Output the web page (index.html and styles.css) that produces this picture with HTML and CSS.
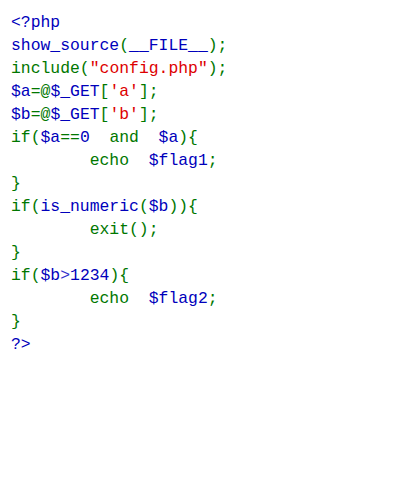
FILE: index.html
```html
<!DOCTYPE html>
<html>
<head>
<meta charset="utf-8">
<link rel="stylesheet" href="styles.css">
</head>
<body>
<code class="src"><span class="d"><div class="ln"><span class="d">&lt;?php</span></div><div class="ln"><span class="d">show_source</span><span class="k">(</span><span class="d">__FILE__</span><span class="k">);</span></div><div class="ln"><span class="k">include(</span><span class="s">"config.php"</span><span class="k">);</span></div><div class="ln"><span class="d">$a</span><span class="k">=@</span><span class="d">$_GET</span><span class="k">[</span><span class="s">'a'</span><span class="k">];</span></div><div class="ln"><span class="d">$b</span><span class="k">=@</span><span class="d">$_GET</span><span class="k">[</span><span class="s">'b'</span><span class="k">];</span></div><div class="ln"><span class="k">if(</span><span class="d">$a</span><span class="k">==</span><span class="d">0</span><span class="k">&nbsp;&nbsp;and&nbsp;&nbsp;</span><span class="d">$a</span><span class="k">){</span></div><div class="ln"><span class="k">&nbsp;&nbsp;&nbsp;&nbsp;&nbsp;&nbsp;&nbsp;&nbsp;echo&nbsp;&nbsp;</span><span class="d">$flag1</span><span class="k">;</span></div><div class="ln"><span class="k">}</span></div><div class="ln"><span class="k">if(</span><span class="d">is_numeric</span><span class="k">(</span><span class="d">$b</span><span class="k">)){</span></div><div class="ln"><span class="k">&nbsp;&nbsp;&nbsp;&nbsp;&nbsp;&nbsp;&nbsp;&nbsp;exit();</span></div><div class="ln"><span class="k">}</span></div><div class="ln"><span class="k">if(</span><span class="d">$b</span><span class="g">&gt;</span><span class="d">1234</span><span class="k">){</span></div><div class="ln"><span class="k">&nbsp;&nbsp;&nbsp;&nbsp;&nbsp;&nbsp;&nbsp;&nbsp;echo&nbsp;&nbsp;</span><span class="d">$flag2</span><span class="k">;</span></div><div class="ln"><span class="k">}</span></div><div class="ln"><span class="d">?&gt;</span></div></span></code>
</body>
</html>
```
FILE: styles.css
```css
html, body {
  background: #ffffff;
}
body {
  margin: 8px;
}
.src {
  display: block;
  padding: 3px 0 0 3px;
  font-family: "Liberation Mono", "DejaVu Sans Mono", monospace;
  font-size: 16.4px;
  line-height: 23px;
  color: #000000;
}
.ln {
  white-space: nowrap;
}
.d { color: #0000BB; }
.k { color: #007700; }
.s { color: #DD0000; }
.g { color: #3333CC; }
```
